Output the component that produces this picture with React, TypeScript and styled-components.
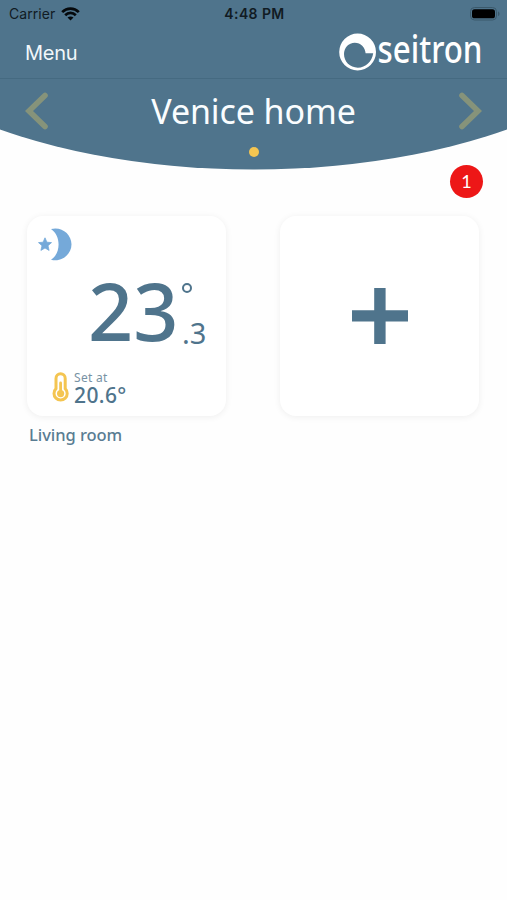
import React from "react";
import styled, { createGlobalStyle } from "styled-components";

const blue = "#4f748c";
const yellow = "#f4c551";

const GlobalStyle = createGlobalStyle`
  * { box-sizing: border-box; }
  body { margin: 0; background: #fefefe; }
`;

const Screen = styled.div`
  width: 507px;
  height: 900px;
  overflow: hidden;
  background: #fefefe;
  color: ${blue};
  font-family: "Noto Sans", sans-serif;
`;

const Header = styled.header`
  height: 169.5px;
  background: ${blue};
  clip-path: ellipse(420px 197px at 50% -27.5px);
`;

const StatusBar = styled.div`
  display: grid;
  grid-template-columns: 1fr auto 1fr;
  align-items: center;
  height: 27px;
  padding: 0 7px 0 9px;
  color: #111b23;
  font: 400 14px/27px Inter, sans-serif;
`;

const Carrier = styled.div`
  display: flex;
  align-items: center;
  gap: 6px;
  letter-spacing: 0.05px;
`;

const Clock = styled.div`
  font-weight: 600;
  font-size: 14px;
  letter-spacing: 0.4px;
`;

const BatterySlot = styled.div`
  display: flex;
  justify-content: flex-end;
`;

const NavBar = styled.nav`
  display: flex;
  align-items: center;
  justify-content: space-between;
  height: 52px;
  padding: 0 22px 0 25px;
  border-bottom: 1px solid #456a81;
`;

const MenuButton = styled.button`
  border: 0;
  padding: 0;
  background: none;
  color: #f2f7fa;
  font: 400 20px/28px Inter, sans-serif;
  letter-spacing: -0.25px;
`;

const HomePicker = styled.div`
  display: flex;
  align-items: center;
  justify-content: space-between;
  height: 64px;
  padding: 0 25px;
`;

const HomeTitle = styled.h1`
  margin: 0;
  color: #fafdff;
  font-size: 34px;
  line-height: 44px;
  font-weight: 400;
  letter-spacing: -0.1px;
  white-space: nowrap;
`;

const ArrowButton = styled.button`
  display: flex;
  border: 0;
  padding: 0;
  background: none;
`;

const PageDot = styled.div`
  width: 10px;
  height: 10px;
  margin: 4px auto 0;
  border-radius: 50%;
  background: ${yellow};
`;

const AlertRow = styled.div`
  display: flex;
  justify-content: flex-end;
  height: 46px;
  padding: 0 24px 0 0;
  margin-top: -4.5px;
`;

const AlertCount = styled.div`
  width: 33px;
  height: 33px;
  border-radius: 50%;
  background: #ed1717;
  color: #fff;
  font-family: Lato, sans-serif;
  font-size: 18px;
  line-height: 33px;
  text-align: center;
`;

const Rooms = styled.main`
  display: grid;
  grid-template-columns: 199px 199px;
  column-gap: 54px;
  padding: 5px 0 0 27px;
`;

const Card = styled.div`
  width: 199px;
  height: 200px;
  border-radius: 16px;
  background: #fff;
  box-shadow: 0 1px 7px rgba(0, 0, 0, 0.065);
`;

const RoomCard = styled(Card)`
  display: flex;
  flex-direction: column;
  padding: 12px 0 0 11px;
`;

const AddCard = styled(Card)`
  display: flex;
  align-items: center;
  justify-content: center;
`;

const Temperature = styled.div`
  display: flex;
  height: 76px;
  margin: 12px 0 0 50px;
`;

const Degrees = styled.span`
  width: 94px;
  font-size: 79px;
  font-weight: 500;
  line-height: 76px;
  letter-spacing: 0;
`;

const Fraction = styled.div`
  display: flex;
  flex-direction: column;
  justify-content: space-between;
  height: 76px;
  padding-top: 10px;
  font-size: 29px;
`;

const DegreeMark = styled.span`
  width: 10px;
  height: 10px;
  border: 2px solid ${blue};
  border-radius: 50%;
`;

const Tenths = styled.span`
  line-height: 32px;
`;

const Target = styled.div`
  display: flex;
  margin: 23px 0 0 14px;
`;

const TargetText = styled.div`
  display: flex;
  flex-direction: column;
  margin: -2px 0 0 5px;
`;

const TargetLabel = styled.span`
  color: #7892a4;
  font-size: 12px;
  line-height: 16px;
  letter-spacing: 0.3px;
`;

const TargetValue = styled.span`
  font-size: 21px;
  font-weight: 500;
  line-height: 19px;
  letter-spacing: 0.4px;
`;

const RoomName = styled.div`
  padding: 8px 0 0 2px;
  font-size: 16.5px;
  font-weight: 500;
  line-height: 22px;
  letter-spacing: -0.05px;
  color: #597c92;
`;

const LogoText = styled.text`
  font-family: "Noto Sans", sans-serif;
  font-size: 38px;
  font-weight: 500;
  fill: #fff;
`;

const Wifi = () => (
  <svg width="19" height="14" viewBox="0 0 19 14" fill="none" stroke="#05090c" strokeWidth="2.7">
    <path d="M1.2 5.1C5.8.5 13.2.5 17.8 5.1M4.2 8.2c3-3 7.6-3 10.6 0" />
    <path d="M9.5 13.5 6.5 10.6c1.7-1.6 4.3-1.6 6 0Z" fill="#05090c" stroke="none" />
  </svg>
);

const Battery = () => (
  <svg width="30" height="14" viewBox="0 0 30 14">
    <rect x="0.5" y="0.5" width="26" height="12.5" rx="4" fill="none" stroke="#3b596b" />
    <rect x="2" y="2.3" width="23" height="9" rx="2.6" fill="#000" />
    <path d="M28 4.5c2 .6 2 4 0 4.6Z" fill="#3b596b" />
  </svg>
);

const Logo = () => (
  <svg width="148" height="52" viewBox="-1 -5.3 148 52" overflow="visible" aria-label="seitron">
    <path
      fillRule="evenodd"
      fill="#fff"
      d="M19.6 1.3a18.4 18.4 0 1 1 0 36.8a18.4 18.4 0 0 1 0-36.8ZM16.8 10.4C10.5 10.4 6 15.6 6 21.8C6 29.4 12 35.4 19.8 35.4C27.7 35.4 34 29 35.2 20.9H27.6C27 15 22.8 10.4 16.8 10.4Z"
    />
    <LogoText x="39.5" y="30.5" textLength="105" lengthAdjust="spacingAndGlyphs">
      seitron
    </LogoText>
  </svg>
);

const Chevron = ({ d }: { d: string }) => (
  <svg width="23" height="38" viewBox="0 0 23 38" fill="none" stroke="#86937a" strokeWidth="5.6">
    <path d={d} strokeLinecap="round" />
  </svg>
);

const NightIcon = () => (
  <svg width="34" height="33" viewBox="0 0 34 33" fill="#75a9d9">
    <path d="M13 1C23.5-1.8 33.5 6 33.5 16.3S23.5 34.5 13 31.7C23.1 25.2 23.1 7.7 13 1Z" />
    <path
      stroke="#75a9d9"
      strokeWidth="0.8"
      strokeLinejoin="round"
      d="m7 9.8 1.9 4.4 4.6.4-3.5 3.1 1.1 4.7L7 20l-4.1 2.4L4 17.7.5 14.6l4.6-.4Z"
    />
  </svg>
);

const Thermometer = () => (
  <svg width="17" height="31" viewBox="0 0 17 31" fill="none" stroke={yellow}>
    <path
      strokeWidth="3"
      d="M4 6.4A4.6 4.6 0 0 1 13.2 6.4V16.6C14.7 18 15.2 19.6 15.2 21.4A6.6 6.6 0 0 1 2 21.4C2 19.6 2.5 18 4 16.6Z"
    />
    <path strokeWidth="2.8" strokeLinecap="round" d="M8.6 11v10" />
    <circle cx="8.6" cy="21.6" r="3.6" fill={yellow} stroke="none" />
  </svg>
);

const Plus = () => (
  <svg width="56" height="56" viewBox="0 0 56 56" fill={blue}>
    <path d="M22.2 0h11.4v22.2H56v11.4H33.6V56H22.2V33.6H0V22.2h22.2Z" />
  </svg>
);

export default function App() {
  return (
    <Screen>
      <GlobalStyle />
      <Header>
        <StatusBar>
          <Carrier>
            Carrier <Wifi />
          </Carrier>
          <Clock>4:48 PM</Clock>
          <BatterySlot>
            <Battery />
          </BatterySlot>
        </StatusBar>
        <NavBar>
          <MenuButton>Menu</MenuButton>
          <Logo />
        </NavBar>
        <HomePicker>
          <ArrowButton aria-label="Previous home">
            <Chevron d="M20 3.4 4 19 20 34.6" />
          </ArrowButton>
          <HomeTitle>Venice home</HomeTitle>
          <ArrowButton aria-label="Next home">
            <Chevron d="M3 3.4 19 19 3 34.6" />
          </ArrowButton>
        </HomePicker>
        <PageDot />
      </Header>
      <AlertRow>
        <AlertCount>1</AlertCount>
      </AlertRow>
      <Rooms>
        <section>
          <RoomCard>
            <NightIcon />
            <Temperature>
              <Degrees>23</Degrees>
              <Fraction>
                <DegreeMark />
                <Tenths>.3</Tenths>
              </Fraction>
            </Temperature>
            <Target>
              <Thermometer />
              <TargetText>
                <TargetLabel>Set at</TargetLabel>
                <TargetValue>20.6°</TargetValue>
              </TargetText>
            </Target>
          </RoomCard>
          <RoomName>Living room</RoomName>
        </section>
        <AddCard role="button" aria-label="Add room">
          <Plus />
        </AddCard>
      </Rooms>
    </Screen>
  );
}
